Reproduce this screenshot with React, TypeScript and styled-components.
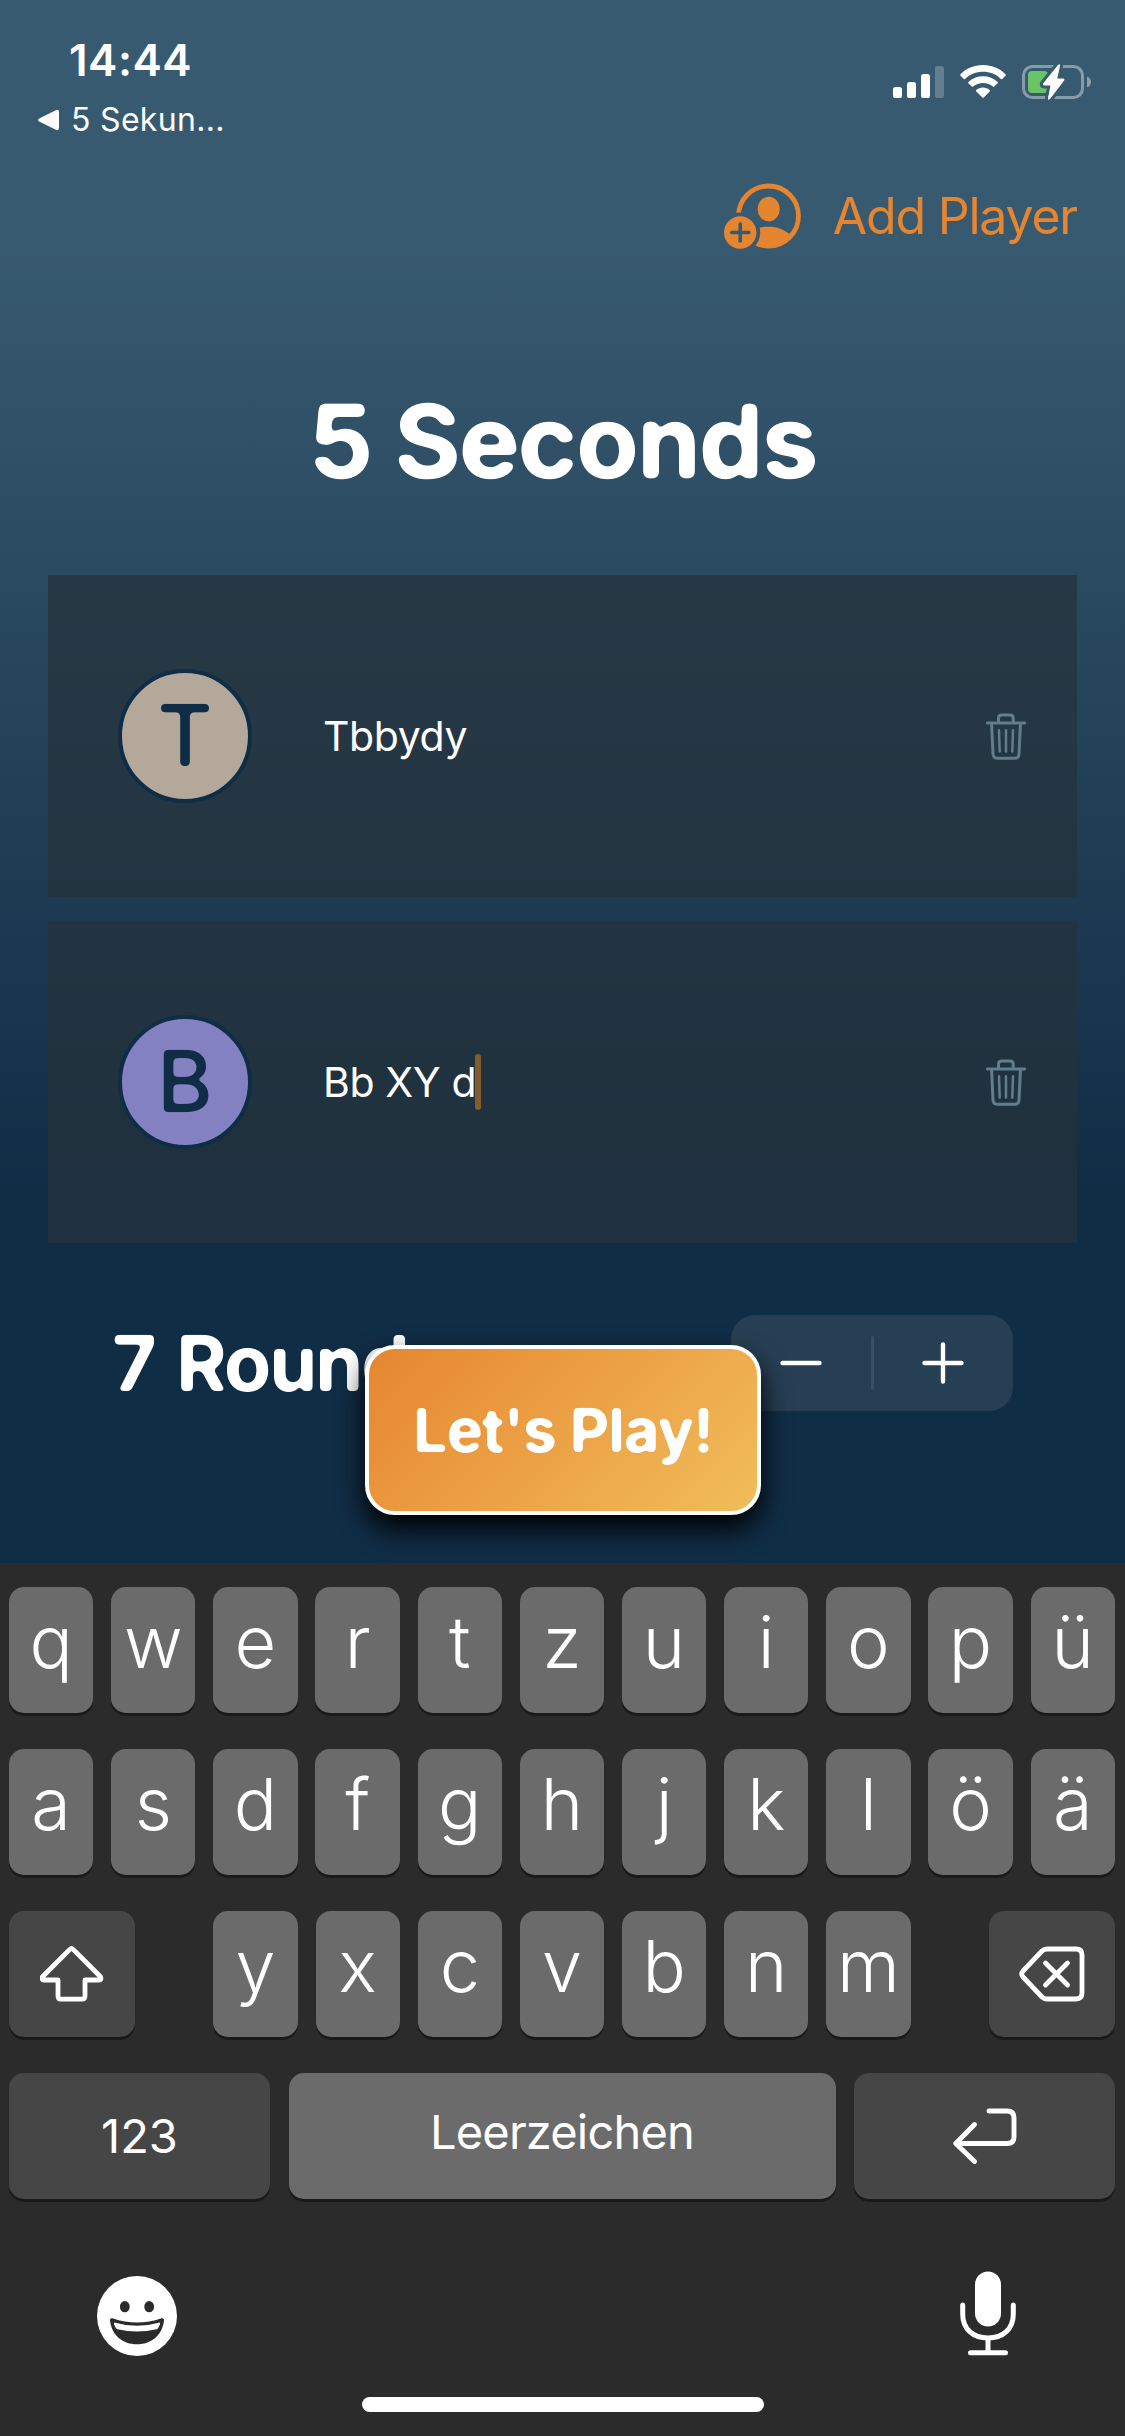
import React from 'react';
import styled, { createGlobalStyle } from 'styled-components';

const GlobalStyle = createGlobalStyle`
  *, *::before, *::after { box-sizing: border-box; }
  html, body { margin: 0; padding: 0; background: #102d46; }
  body { font-family: Inter, Roboto, "Liberation Sans", sans-serif; -webkit-font-smoothing: antialiased; }
  button { font: inherit; border: 0; padding: 0; background: none; color: inherit; }
  svg { display: block; flex: none; }
`;

const Screen = styled.div`
  position: relative;
  width: 1125px;
  height: 2436px;
  overflow: hidden;
  display: flex;
  flex-direction: column;
  color: #fff;
  background: linear-gradient(180deg, #385a70 0, #385a70 240px, #102d46 1190px);
`;

const StatusBar = styled.header`
  height: 152px;
  padding: 35px 33px 0 38px;
  display: flex;
  justify-content: space-between;
  align-items: flex-start;
`;

const StatusLeft = styled.div`
  display: flex;
  flex-direction: column;
`;

const Clock = styled.div`
  padding-left: 31px;
  height: 50px;
  line-height: 50px;
  font-size: 44px;
  font-weight: 600;
  letter-spacing: 0.5px;
`;

const BackLink = styled.div`
  margin-top: 15px;
  height: 40px;
  display: flex;
  align-items: center;
  gap: 12px;
  font-size: 32px;
  line-height: 40px;
  letter-spacing: 0.3px;
`;

const StatusIcons = styled.div`
  padding-top: 29px;
  display: flex;
  gap: 16px;
`;

const Toolbar = styled.div`
  height: 128px;
  padding: 0 48px 0 0;
  display: flex;
  justify-content: flex-end;
  align-items: center;
`;

const AddPlayer = styled.button`
  display: flex;
  align-items: center;
  gap: 31px;
  color: #e58530;
  font-size: 50px;
  line-height: 60px;
  letter-spacing: -1.2px;
`;

const Title = styled.h1`
  margin: 101px 0 0;
  height: 120px;
  line-height: 120px;
  font-size: 102px;
  font-weight: 700;
  letter-spacing: -1.7px;
  text-align: center;
  filter: url(#round-large);
`;

const PlayerList = styled.main`
  margin: 74px 48px 0;
  display: flex;
  flex-direction: column;
  gap: 24px;
`;

const PlayerCard = styled.section`
  height: 322px;
  padding: 0 51px 0 70px;
  display: flex;
  align-items: center;
  background: rgba(38, 50, 58, 0.7);
`;

const Avatar = styled.div<{ $fill: string }>`
  width: 134px;
  height: 134px;
  border-radius: 50%;
  border: 4px solid #102d46;
  background: ${(p) => p.$fill};
  display: flex;
  align-items: center;
  justify-content: center;
`;

const Initial = styled.span`
  color: #102d46;
  font-size: 85px;
  line-height: 84px;
  font-weight: 540;
  filter: url(#round-small);
`;

const NameField = styled.div`
  flex: 1;
  margin-left: 71px;
  display: flex;
  align-items: center;
  font-size: 41px;
  line-height: 56px;
  letter-spacing: -0.4px;
  white-space: pre;
`;

const Caret = styled.i`
  width: 6px;
  height: 56px;
  margin-left: -1px;
  border-radius: 3px;
  background: #835c2e;
`;

const RoundsRow = styled.section`
  margin: 72px 112px 0 112px;
  height: 96px;
  display: flex;
  justify-content: space-between;
  align-items: center;
`;

const RoundsLabel = styled.h2`
  margin: 0;
  font-size: 77px;
  line-height: 96px;
  font-weight: 700;
  letter-spacing: -1.9px;
  word-spacing: 5px;
  filter: url(#round-small);
`;

const Stepper = styled.div`
  width: 282px;
  height: 96px;
  border-radius: 24px;
  background: #273f54;
  display: flex;
  align-items: center;
`;

const StepButton = styled.button`
  flex: 1;
  height: 96px;
  display: flex;
  align-items: center;
  justify-content: center;
`;

const StepDivider = styled.i`
  width: 3px;
  height: 54px;
  border-radius: 2px;
  background: #3c4f62;
`;

const PlayButton = styled.button`
  && {
    position: absolute;
    left: 365px;
    top: 1345px;
    width: 396px;
    height: 170px;
    border: 4px solid #fff;
    border-radius: 30px;
    background: linear-gradient(135deg, #e58530 0%, #ea953c 28%, #f1be5c 100%);
    background-origin: border-box;
    box-shadow: 0 14px 28px 0 #000;
  }
`;

const PlayLabel = styled.span`
  display: block;
  font-size: 61px;
  line-height: 76px;
  font-weight: 700;
  letter-spacing: -0.9px;
  filter: url(#round-small);
`;

const Keyboard = styled.footer`
  margin-top: auto;
  height: 873px;
  padding: 24px 10px 0 9px;
  background: #2b2b2b;
  display: flex;
  flex-direction: column;
`;

const KeyRow = styled.div`
  height: 126px;
  margin-bottom: 36px;
  display: flex;
  justify-content: space-between;
`;

const LetterGroup = styled.div`
  display: flex;
  gap: 17.9px;
`;

const LetterKey = styled.button`
  && {
    width: 84.27px;
    height: 126px;
    padding-bottom: 16px;
    border-radius: 15px;
    background: #6b6b6b;
    box-shadow: 0 3px 0 #1a1a1a;
    font-size: 72px;
    font-weight: 350;
    line-height: 110px;
    text-align: center;
  }
`;

const WideKey = styled.button<{ $width: number; $light?: boolean }>`
  && {
    width: ${(p) => p.$width}px;
    height: 126px;
    padding-bottom: ${(p) => (p.$light ? 8 : 0)}px;
    border-radius: 15px;
    background: ${(p) => (p.$light ? '#6b6b6b' : '#464646')};
    box-shadow: 0 3px 0 #1a1a1a;
    display: flex;
    align-items: center;
    justify-content: center;
    font-size: 47px;
    line-height: 60px;
    font-weight: 400;
    letter-spacing: ${(p) => (p.$light ? -0.8 : 0)}px;
  }
`;

const KeyboardFooter = styled.div`
  margin-top: 31px;
  padding: 0 99px 0 88px;
  height: 100px;
  display: flex;
  justify-content: space-between;
  align-items: flex-start;
`;

const EmojiSlot = styled.div`
  padding-top: 10px;
`;

const MicSlot = styled.div`
  padding-top: 5px;
`;

const HomeIndicator = styled.div`
  align-self: center;
  margin: 31px 0 0 1px;
  width: 402px;
  height: 15px;
  border-radius: 8px;
  background: #fff;
`;

const FilterDefs = styled.svg`
  position: absolute;
  width: 0;
  height: 0;
`;

/* Softens the corners of heading glyphs into a rounded face. */
const RoundedTypeFilters = () => (
  <FilterDefs aria-hidden="true">
    <filter id="round-large" x="0" y="0" width="100%" height="100%" colorInterpolationFilters="sRGB">
      <feGaussianBlur stdDeviation="3.4" />
      <feComponentTransfer>
        <feFuncA type="linear" slope="9" intercept="-3.6" />
      </feComponentTransfer>
    </filter>
    <filter id="round-small" x="-10%" y="-10%" width="120%" height="120%" colorInterpolationFilters="sRGB">
      <feGaussianBlur stdDeviation="2.1" />
      <feComponentTransfer>
        <feFuncA type="linear" slope="6" intercept="-2.4" />
      </feComponentTransfer>
    </filter>
  </FilterDefs>
);

const BackTriangle = () => (
  <svg width="21" height="22" viewBox="0 0 21 22" fill="#fff">
    <path d="M1.2 9.4 17.8 1.2Q21 0 21 3.2V18.8Q21 22 17.8 20.8L1.2 12.6Q-1 11 1.2 9.4Z" />
  </svg>
);

const SignalIcon = () => (
  <svg width="51" height="34" viewBox="0 0 51 34" fill="#fff">
    <rect x="0" y="23" width="9" height="11" rx="2.6" />
    <rect x="14" y="18" width="9" height="16" rx="2.6" />
    <rect x="28" y="10" width="9" height="24" rx="2.6" />
    <rect x="42" y="2" width="9" height="32" rx="2.6" opacity="0.22" />
  </svg>
);

const WifiIcon = () => (
  <svg width="46" height="34" viewBox="0 0 46 34" fill="#fff">
    <path d="M23 1C32 1 40 4.500 45.500 10.200Q46.200 11 45.500 11.700L42.300 14.900Q41.600 15.500 40.900 14.900C36 10.300 29.800 7.800 23 7.800S10 10.300 5.100 14.900Q4.400 15.500 3.700 14.900L.5 11.700Q-.2 11 .5 10.200C6 4.500 14 1 23 1Z" />
    <path d="M23 12.300C28.700 12.300 33.800 14.300 37.500 18Q38.200 18.700 37.500 19.400L34.200 22.500Q33.600 23.100 32.900 22.500C30.200 20.200 26.700 19 23 19S15.800 20.200 13.100 22.500Q12.400 23.100 11.800 22.500L8.500 19.400Q7.800 18.700 8.500 18C12.200 14.300 17.300 12.300 23 12.300Z" />
    <path d="M23 23.500C25.500 23.500 28 24.400 29.700 26Q30.400 26.700 29.700 27.400L23.700 33.400Q23 34.100 22.300 33.400L16.300 27.400Q15.600 26.700 16.300 26C18 24.400 20.500 23.500 23 23.500Z" />
  </svg>
);

const BatteryIcon = () => (
  <svg width="70" height="38" viewBox="0 0 70 38">
    <mask id="bolt-gap" maskUnits="userSpaceOnUse" x="0" y="0" width="70" height="38">
      <rect width="70" height="38" fill="#fff" />
      <path d="M36 .9Q38.300 -.8 38 2L35.300 14.500H40.500Q43.300 14.500 42 16.800L28 35Q25.700 36.700 26 34L28.500 21.500H22.500Q20 21.500 21.200 19.200Z" fill="#000" stroke="#000" strokeWidth="6" />
    </mask>
    <g mask="url(#bolt-gap)">
      <rect x="1.500" y="2.500" width="59" height="31" rx="9" fill="none" stroke="#fff" strokeOpacity="0.4" strokeWidth="3" />
      <rect x="6" y="7" width="20" height="22" rx="4" fill="#68c466" />
    </g>
    <path d="M65 12.500Q69 14 69 18T65 23.500Z" fill="#fff" opacity="0.42" />
    <path d="M36 .9Q38.300 -.8 38 2L35.300 14.500H40.500Q43.300 14.500 42 16.800L28 35Q25.700 36.700 26 34L28.500 21.500H22.500Q20 21.500 21.200 19.200Z" fill="#fff" />
  </svg>
);

const AddPersonIcon = () => (
  <svg width="78" height="66" viewBox="0 0 78 66">
    <mask id="badge-gap" maskUnits="userSpaceOnUse" x="0" y="0" width="78" height="66">
      <rect width="78" height="66" fill="#fff" />
      <circle cx="16.200" cy="49.500" r="20" fill="#000" />
    </mask>
    <clipPath id="person-clip">
      <circle cx="44.500" cy="33" r="32" />
    </clipPath>
    <g mask="url(#badge-gap)">
      <circle cx="44.500" cy="33" r="30" fill="none" stroke="#e58530" strokeWidth="4.800" />
      <path clipPath="url(#person-clip)" d="M20 66V52C28 45.500 36 43.700 44.500 43.700S60 46 67 52.500L62 66Z" fill="#e58530" />
      <ellipse cx="44.700" cy="26" rx="11" ry="12.300" fill="#e58530" />
    </g>
    <circle cx="16.200" cy="49.500" r="16.200" fill="#e58530" />
    <path d="M16.200 41V58M7.700 49.500H24.700" stroke="#385a70" strokeWidth="3.600" strokeLinecap="round" />
  </svg>
);

const TrashIcon = () => (
  <svg width="40" height="47" viewBox="0 0 40 47" fill="none" stroke="#627d8d" strokeLinecap="round" strokeLinejoin="round">
    <path d="M1.300 10H38.700" strokeWidth="2.800" />
    <path d="M12.500 9.500V5Q12.500 2 15.500 2H24.200Q27.200 2 27.200 5V9.500" strokeWidth="3" />
    <path d="M5.600 11 7 41Q7.200 45.200 11 45.200H29Q32.800 45.200 33 41L34.400 11" strokeWidth="3" />
    <path d="M13 17.200 13.700 38.500M20 17.200V38.500M27 17.200 26.300 38.500" strokeWidth="2.500" />
  </svg>
);

const MinusIcon = () => (
  <svg width="42" height="42" viewBox="0 0 42 42">
    <path d="M2.500 21H39.500" stroke="#fff" strokeWidth="4.400" strokeLinecap="round" />
  </svg>
);

const PlusIcon = () => (
  <svg width="42" height="42" viewBox="0 0 42 42">
    <path d="M2.500 21H39.500M21 2.500V39.500" stroke="#fff" strokeWidth="4.400" strokeLinecap="round" />
  </svg>
);

const ShiftIcon = () => (
  <svg width="64" height="56" viewBox="0.5 0 64 56" fill="none" stroke="#fff" strokeWidth="4.800" strokeLinejoin="round">
    <path d="M30.300 3.400Q32 1.700 33.700 3.400L61 30.700Q62.300 34 59.500 34H45.500V50Q45.500 53.200 42.500 53.200H21.500Q18.500 53.200 18.500 50V34H4.500Q1.700 34 3 30.700Z" />
  </svg>
);

const BackspaceIcon = () => (
  <svg width="66" height="56" viewBox="0 0 66 56" fill="none" stroke="#fff" strokeWidth="4.800" strokeLinecap="round" strokeLinejoin="round">
    <path d="M28 3H57Q63 3 63 9V47Q63 53 57 53H28Q25 53 23 51L4 31Q1.400 28 4 25L23 5Q25 3 28 3Z" />
    <path d="M26.500 17 48.500 39M48.500 17 26.500 39" strokeWidth="4.800" />
  </svg>
);

const ReturnIcon = () => (
  <svg width="64" height="56" viewBox="0 0 64 56" fill="none" stroke="#fff" strokeWidth="4.900" strokeLinecap="round" strokeLinejoin="round">
    <path d="M36 3H54Q61 3 61 10V29Q61 35.500 54 35.500H3.500" />
    <path d="M21.500 16.500 2.800 35.500 21.500 53.500" />
  </svg>
);

const EmojiIcon = () => (
  <svg width="80" height="80" viewBox="0 0 80 80">
    <circle cx="40" cy="40" r="40" fill="#fff" />
    <ellipse cx="27.800" cy="30.700" rx="4.900" ry="5.600" fill="#2b2b2b" />
    <ellipse cx="52.200" cy="30.700" rx="4.900" ry="5.600" fill="#2b2b2b" />
    <path d="M15.500 42.200Q40 51 64.500 42.200Q67.300 41.700 67 44.800C65 60 54 68.300 40 68.300S15 60 13 44.800Q12.700 41.700 15.500 42.200Z" fill="#2b2b2b" />
    <path d="M18.500 46.700Q40 53 61.500 46.700Q63.500 46.200 63 48.500L61.300 51.800Q60.700 52.900 59.500 53.200Q40 57.700 20.500 53.200Q19.300 52.900 18.700 51.800L17 48.500Q16.500 46.200 18.500 46.700Z" fill="#fff" />
  </svg>
);

const MicIcon = () => (
  <svg width="56" height="85" viewBox="0 0 56 85" fill="none" stroke="#fff" strokeWidth="5" strokeLinecap="round">
    <rect x="15" y="0.500" width="26" height="55" rx="13" fill="#fff" stroke="none" />
    <path d="M2.700 34V43C2.700 58 13 67 28 67S53.300 58 53.300 43V34" />
    <path d="M28 68V81M10.500 81.800H45.500" />
  </svg>
);

const players = [
  { name: 'Tbbydy', color: '#b3a89a', active: false },
  { name: 'Bb XY d', color: '#8481c2', active: true },
];

const topRow = ['q', 'w', 'e', 'r', 't', 'z', 'u', 'i', 'o', 'p', 'ü'];
const homeRow = ['a', 's', 'd', 'f', 'g', 'h', 'j', 'k', 'l', 'ö', 'ä'];
const bottomRow = ['y', 'x', 'c', 'v', 'b', 'n', 'm'];

const Letters = ({ keys }: { keys: string[] }) => (
  <LetterGroup>
    {keys.map((k) => (
      <LetterKey key={k}>{k}</LetterKey>
    ))}
  </LetterGroup>
);

export default function App() {
  return (
    <>
      <GlobalStyle />
      <Screen>
        <RoundedTypeFilters />
        <StatusBar>
          <StatusLeft>
            <Clock>14:44</Clock>
            <BackLink>
              <BackTriangle />
              <span>5 Sekun...</span>
            </BackLink>
          </StatusLeft>
          <StatusIcons>
            <SignalIcon />
            <WifiIcon />
            <BatteryIcon />
          </StatusIcons>
        </StatusBar>
        <Toolbar>
          <AddPlayer>
            <AddPersonIcon />
            <span>Add Player</span>
          </AddPlayer>
        </Toolbar>
        <Title>5 Seconds</Title>
        <PlayerList>
          {players.map((p) => (
            <PlayerCard key={p.name}>
              <Avatar $fill={p.color}>
                <Initial>{p.name[0]}</Initial>
              </Avatar>
              <NameField>
                <span>{p.name}</span>
                {p.active && <Caret />}
              </NameField>
              <TrashIcon />
            </PlayerCard>
          ))}
        </PlayerList>
        <RoundsRow>
          <RoundsLabel>7 Rounds</RoundsLabel>
          <Stepper>
            <StepButton aria-label="Fewer rounds">
              <MinusIcon />
            </StepButton>
            <StepDivider />
            <StepButton aria-label="More rounds">
              <PlusIcon />
            </StepButton>
          </Stepper>
        </RoundsRow>
        <PlayButton>
          <PlayLabel>Let's Play!</PlayLabel>
        </PlayButton>
        <Keyboard>
          <KeyRow>
            <Letters keys={topRow} />
          </KeyRow>
          <KeyRow>
            <Letters keys={homeRow} />
          </KeyRow>
          <KeyRow>
            <WideKey $width={126} aria-label="Shift">
              <ShiftIcon />
            </WideKey>
            <Letters keys={bottomRow} />
            <WideKey $width={126} aria-label="Delete">
              <BackspaceIcon />
            </WideKey>
          </KeyRow>
          <KeyRow>
            <WideKey $width={261}>123</WideKey>
            <WideKey $width={547} $light>
              Leerzeichen
            </WideKey>
            <WideKey $width={261} aria-label="Return">
              <ReturnIcon />
            </WideKey>
          </KeyRow>
          <KeyboardFooter>
            <EmojiSlot>
              <EmojiIcon />
            </EmojiSlot>
            <MicSlot>
              <MicIcon />
            </MicSlot>
          </KeyboardFooter>
          <HomeIndicator />
        </Keyboard>
      </Screen>
    </>
  );
}
